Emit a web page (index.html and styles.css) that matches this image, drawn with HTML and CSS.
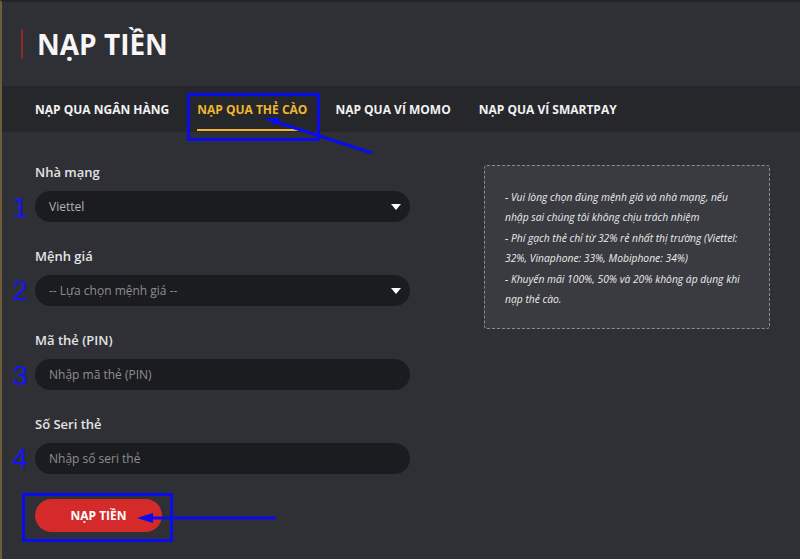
FILE: index.html
```html
<!DOCTYPE html>
<html lang="vi">
<head>
    <meta charset="UTF-8">
    <meta name="viewport" content="width=device-width, initial-scale=1.0">
    <title>Nạp tiền</title>
    <link rel="stylesheet" href="styles.css">
</head>
<body>
    <div class="page">
        <div class="page-header">
            <h1>NẠP TIỀN</h1>
        </div>

        <div class="tabs">
            <a href="#" class="tab">NẠP QUA NGÂN HÀNG</a>
            <a href="#" class="tab active">NẠP QUA THẺ CÀO</a>
            <a href="#" class="tab">NẠP QUA VÍ MOMO</a>
            <a href="#" class="tab">NẠP QUA VÍ SMARTPAY</a>
        </div>

        <div class="content">
            <form class="card-form">
                <div class="field">
                    <label>Nhà mạng</label>
                    <div class="select">
                        <span class="value">Viettel</span>
                    </div>
                </div>

                <div class="field">
                    <label>Mệnh giá</label>
                    <div class="select">
                        <span class="value placeholder">-- Lựa chọn mệnh giá --</span>
                    </div>
                </div>

                <div class="field">
                    <label>Mã thẻ (PIN)</label>
                    <input type="text" class="input" placeholder="Nhập mã thẻ (PIN)">
                </div>

                <div class="field">
                    <label>Số Seri thẻ</label>
                    <input type="text" class="input" placeholder="Nhập số seri thẻ">
                </div>

                <button type="button" class="btn-submit">NẠP TIỀN</button>
            </form>

            <div class="notice">
                <p>- Vui lòng chọn đúng mệnh giá và nhà mạng, nếu nhập sai chúng tôi không chịu trách nhiệm</p>
                <p>- Phí gạch thẻ chỉ từ 32% rẻ nhất thị trường (Viettel: 32%, Vinaphone: 33%, Mobiphone: 34%)</p>
                <p>- Khuyến mãi 100%, 50% và 20% không áp dụng khi nạp thẻ cào.</p>
            </div>
        </div>

        <!-- huong dan: khung, mui ten va so thu tu -->
        <svg class="guide" width="800" height="559" viewBox="0 0 800 559">
            <g fill="none" stroke="#0b0bf0" stroke-width="3">
                <rect x="188.5" y="94.5" width="130" height="45"/>
                <rect x="23.5" y="494.5" width="148" height="46"/>
                <line x1="372" y1="153" x2="276" y2="122"/>
                <line x1="276" y1="518" x2="150" y2="518"/>
            </g>
            <g fill="#0b0bf0">
                <polygon points="264,118 280,118 276,125"/>
                <polygon points="137,518 153,513 153,523"/>
            </g>
            <g class="step-no" fill="#1414f5">
                <text x="20" y="217">1</text>
                <text x="20" y="300">2</text>
                <text x="20" y="385">3</text>
                <text x="20" y="468">4</text>
            </g>
        </svg>
    </div>
</body>
</html>
```

FILE: styles.css
```css
* {
    margin: 0;
    padding: 0;
    box-sizing: border-box;
}

body {
    font-family: 'Open Sans', 'Noto Sans', sans-serif;
    background: #2e3035;
    color: #fff;
}

.page {
    position: relative;
    width: 800px;
    height: 559px;
    overflow: hidden;
    border-left: 2px solid #6e5c3a;
    border-top: 2px solid #222327;
}

.page-header {
    height: 84px;
    padding: 27px 0 0 19px;
}

.page-header h1 {
    font-size: 28px;
    font-weight: 700;
    line-height: 30px;
    border-left: 2px solid #8d2a2c;
    padding-left: 14px;
    color: #f6f6f6;
}

.tabs {
    display: flex;
    gap: 28px;
    height: 46px;
    padding-left: 33px;
    background: #25272b;
}

.tab {
    position: relative;
    display: flex;
    align-items: center;
    font-size: 12px;
    font-weight: 700;
    color: #f2f2f2;
    text-decoration: none;
}

.tab.active {
    color: #f1b631;
}

.tab.active::after {
    content: '';
    position: absolute;
    left: 0;
    right: 6px;
    bottom: 1px;
    height: 2px;
    background: #f1b631;
}

.content {
    display: grid;
    grid-template-columns: 375px 286px;
    gap: 74px;
    padding: 31px 0 0 33px;
}

.field {
    margin-bottom: 25px;
}

.field label {
    display: block;
    font-size: 13px;
    font-weight: 600;
    line-height: 18px;
    color: #e4e4e4;
    margin-bottom: 10px;
}

.select,
.input {
    display: flex;
    align-items: center;
    width: 100%;
    height: 31px;
    padding: 0 14px;
    border: none;
    border-radius: 16px;
    background: #1b1c1f;
    font-family: inherit;
    font-size: 12px;
    color: #b3b3b3;
    outline: none;
}

.select {
    position: relative;
}

.select::after {
    content: '';
    position: absolute;
    right: 9px;
    top: 13px;
    border-left: 5px solid transparent;
    border-right: 5px solid transparent;
    border-top: 6px solid #fff;
}

.value.placeholder,
.input::placeholder {
    color: #8e8e90;
}

.btn-submit {
    display: block;
    margin-top: 1px;
    width: 127px;
    height: 33px;
    border: none;
    border-radius: 17px;
    background: #d42a2a;
    color: #fff;
    font-family: inherit;
    font-size: 12px;
    font-weight: 700;
}

.notice {
    align-self: start;
    margin-top: 2px;
    height: 164px;
    padding: 21px 24px 0 20px;
    background: #393b40;
    border: 1px dashed #8a8b8e;
    border-radius: 3px;
}

.notice p {
    font-size: 10.3px;
    font-style: italic;
    line-height: 20.4px;
    color: #ececec;
}

.guide {
    position: absolute;
    left: -2px;
    top: -2px;
    pointer-events: none;
}

.step-no text {
    font-family: 'Liberation Sans', sans-serif;
    font-size: 28px;
    text-anchor: middle;
}
```
